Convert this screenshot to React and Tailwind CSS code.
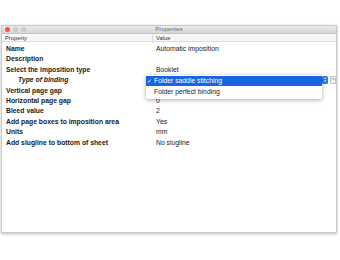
import React from 'react';

const rows = [
  { label: 'Name', value: 'Automatic imposition' },
  { label: 'Description', value: '' },
  { label: 'Select the imposition type', value: 'Booklet' },
  { label: 'Type of binding', value: null, indent: true },
  { label: 'Vertical page gap', value: '' },
  { label: 'Horizontal page gap', value: '0' },
  { label: 'Bleed value', value: '2' },
  { label: 'Add page boxes to imposition area', value: 'Yes' },
  { label: 'Units', value: 'mm' },
  { label: 'Add slugline to bottom of sheet', value: 'No slugline' },
];

function BindingPopup() {
  return (
    <div className="absolute left-[-7px] top-[0px] w-[176px] bg-white rounded-[2px] shadow-[0_1px_4px_rgba(0,0,0,0.35)] py-[1px] z-10">
      <div className="flex items-center h-[10px] bg-[#1a64e0] text-white">
        <span className="w-[8px] pl-[1px] text-[6px]">✓</span>
        <span>Folder saddle stitching</span>
      </div>
      <div className="flex items-center h-[12px] text-[#222]">
        <span className="w-[8px]" />
        <span>Folder perfect binding</span>
      </div>
    </div>
  );
}

function App() {
  return (
    <div className="w-[340px] h-[260px] bg-white pt-[25px] pl-[1px]" style={{ fontFamily: '"Liberation Sans", Arial, sans-serif' }}>
      <div className="w-[336px] h-[208px] flex flex-col border border-[#c8c8c8] shadow-[0_1px_3px_rgba(0,0,0,0.25)] bg-white overflow-hidden">
        {/* title bar */}
        <div className="relative h-[8px] flex items-center bg-gradient-to-b from-[#ebebeb] to-[#d6d6d6] border-b border-[#c4c4c4]">
          <div className="flex gap-[3px] pl-[3px]">
            <span className="w-[5px] h-[5px] rounded-full bg-[#f0564f]" />
            <span className="w-[5px] h-[5px] rounded-full bg-[#d3d3d3] border border-[#c0c0c0]" />
            <span className="w-[5px] h-[5px] rounded-full bg-[#d3d3d3] border border-[#c0c0c0]" />
          </div>
          <div className="absolute inset-0 flex items-center justify-center text-[6px] text-[#6d6d6d]">Properties</div>
        </div>
        {/* header */}
        <div className="grid grid-cols-[151px_1fr] h-[8px] bg-[#f6f6f6] border-b border-[#dcdcdc] text-[5.8px] text-[#333]">
          <div className="pl-[3px] flex items-center border-r border-[#dcdcdc]">Property</div>
          <div className="pl-[3px] flex items-center">Value</div>
        </div>
        <div className="pt-[2px] text-[6.8px] text-[#1a1a1a]">
          {rows.map((r) => (
            <div key={r.label} className="grid grid-cols-[151px_1fr] h-[10.4px] items-center">
              <div className={r.indent ? 'pl-[16px] font-bold italic' : 'pl-[4px] font-bold'}>{r.label}</div>
              <div className="relative pl-[3px] h-full flex items-center">
                {r.value}
                {r.value === null && (
                  <>
                    <BindingPopup />
                    <div className="absolute left-[169px] top-[1px] w-[6px] h-[8px] rounded-[1.5px] bg-[#2b7cf0] flex flex-col items-center justify-center text-white text-[3px] leading-[3px]">
                      <span>▲</span>
                      <span>▼</span>
                    </div>
                    <div className="absolute left-[177px] top-[1px] w-[6px] h-[8px] rounded-[1px] border border-[#c0c0c0] bg-[#f7f7f7] flex items-center justify-center text-[5px] text-[#444]">&gt;</div>
                  </>
                )}
              </div>
            </div>
          ))}
        </div>
      </div>
    </div>
  );
}

export default App;
